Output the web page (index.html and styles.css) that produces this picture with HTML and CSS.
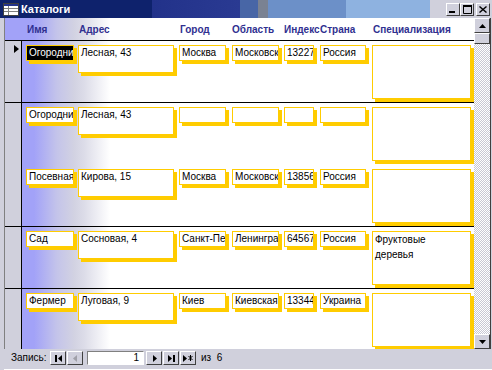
FILE: index.html
```html
<!DOCTYPE html>
<html lang="ru">
<head>
    <meta charset="UTF-8">
    <title>Каталоги</title>
    <link rel="stylesheet" href="styles.css">
</head>
<body>
    <div class="window">
        <!-- заголовок окна -->
        <div class="titlebar">
            <svg class="appicon" width="16" height="13" viewBox="0 0 16 13">
                <rect x="0.5" y="0.5" width="15" height="12" fill="#fff" stroke="#404040"/>
                <rect x="1" y="1" width="14" height="2" fill="#24348c"/>
                <path d="M1 5.5h14M1 8.5h14M5.5 3v9" stroke="#808080"/>
            </svg>
            <span class="title">Каталоги</span>
            <div class="tbuttons">
                <span class="tbtn"><svg width="8" height="8" viewBox="0 0 8 8"><rect x="0" y="6" width="6" height="2" fill="#000"/></svg></span>
                <span class="tbtn"><svg width="9" height="9" viewBox="0 0 9 9"><path d="M0.5 1.5h8v7h-8z" fill="none" stroke="#000"/><rect x="0" y="0" width="9" height="2" fill="#000"/></svg></span>
                <span class="tbtn close"><svg width="8" height="7" viewBox="0 0 8 7"><path d="M0.5 0.5l7 6M7.5 0.5l-7 6" stroke="#000" stroke-width="1.4"/></svg></span>
            </div>
        </div>

        <div class="client">
            <div class="main">
                <div class="sheet">
                    <div class="header">
                        <span class="h-name">Имя</span>
                        <span class="h-addr">Адрес</span>
                        <span class="h-city">Город</span>
                        <span class="h-region">Область</span>
                        <span class="h-zip">Индекс</span>
                        <span class="h-country">Страна</span>
                        <span class="h-spec">Специализация</span>
                    </div>

                    <div class="row">
                        <div class="sel"><span class="arrow"></span></div>
                        <div class="cells">
                            <div class="fld f-name selected">Огородник</div>
                            <div class="fld f-addr">Лесная, 43</div>
                            <div class="fld f-city">Москва</div>
                            <div class="fld f-region">Московская</div>
                            <div class="fld f-zip">13227</div>
                            <div class="fld f-country">Россия</div>
                            <div class="fld f-spec"></div>
                        </div>
                    </div>

                    <div class="row noline">
                        <div class="sel"></div>
                        <div class="cells">
                            <div class="fld f-name">Огородник</div>
                            <div class="fld f-addr">Лесная, 43</div>
                            <div class="fld f-city"></div>
                            <div class="fld f-region"></div>
                            <div class="fld f-zip"></div>
                            <div class="fld f-country"></div>
                            <div class="fld f-spec"></div>
                        </div>
                    </div>

                    <div class="row">
                        <div class="sel"></div>
                        <div class="cells">
                            <div class="fld f-name">Посевная</div>
                            <div class="fld f-addr">Кирова, 15</div>
                            <div class="fld f-city">Москва</div>
                            <div class="fld f-region">Московская</div>
                            <div class="fld f-zip">13856</div>
                            <div class="fld f-country">Россия</div>
                            <div class="fld f-spec"></div>
                        </div>
                    </div>

                    <div class="row">
                        <div class="sel"></div>
                        <div class="cells">
                            <div class="fld f-name">Сад</div>
                            <div class="fld f-addr">Сосновая, 4</div>
                            <div class="fld f-city">Санкт-Петербург</div>
                            <div class="fld f-region">Ленинградская</div>
                            <div class="fld f-zip">64567</div>
                            <div class="fld f-country">Россия</div>
                            <div class="fld f-spec">Фруктовые деревья</div>
                        </div>
                    </div>

                    <div class="row">
                        <div class="sel"></div>
                        <div class="cells">
                            <div class="fld f-name">Фермер</div>
                            <div class="fld f-addr">Луговая, 9</div>
                            <div class="fld f-city">Киев</div>
                            <div class="fld f-region">Киевская</div>
                            <div class="fld f-zip">13344</div>
                            <div class="fld f-country">Украина</div>
                            <div class="fld f-spec"></div>
                        </div>
                    </div>
                </div>

                <!-- вертикальная полоса прокрутки -->
                <div class="vscroll">
                    <span class="sbtn"><svg width="7" height="4" viewBox="0 0 7 4"><path d="M3.5 0L7 4H0z" fill="#000"/></svg></span>
                    <span class="thumb"></span>
                    <span class="track"></span>
                    <span class="sbtn"><svg width="7" height="4" viewBox="0 0 7 4"><path d="M0 0h7L3.5 4z" fill="#000"/></svg></span>
                </div>
            </div>

            <!-- навигация по записям -->
            <div class="footer">
                <span class="rec-label">Запись:</span>
                <span class="nbtn"><svg width="7" height="7" viewBox="0 0 7 7"><rect x="0" y="0" width="2" height="7" fill="#000"/><path d="M7 0v7L3 3.5z" fill="#000"/></svg></span>
                <span class="nbtn"><svg width="5" height="7" viewBox="0 0 5 7"><path d="M4 0v7L0 3.5z" fill="#a0a0a8"/></svg></span>
                <span class="recno">1</span>
                <span class="nbtn"><svg width="5" height="7" viewBox="0 0 5 7"><path d="M1 0v7l4-3.5z" fill="#000"/></svg></span>
                <span class="nbtn"><svg width="7" height="7" viewBox="0 0 7 7"><path d="M0 0v7l4-3.5z" fill="#000"/><rect x="5" y="0" width="2" height="7" fill="#000"/></svg></span>
                <span class="nbtn"><svg width="10" height="7" viewBox="0 0 10 7"><path d="M0 0v7l4-3.5z" fill="#000"/><path d="M5.5 1l4 4M9.5 1l-4 4M7.5 0v6" stroke="#000"/></svg></span>
                <span class="rec-total">из &nbsp;6</span>
            </div>
        </div>
    </div>
</body>
</html>
```

FILE: styles.css
```css
body{
    margin: 0;
    background-color: #d0d0dc;
    font-family: "Liberation Sans", Arial, sans-serif;
}
.window{
    width: 492px;
    height: 370px;
    display: flex;
    flex-direction: column;
    overflow: hidden;
}
/* заголовок окна - ступенчатый градиент */
.titlebar{
    height: 18px;
    display: flex;
    align-items: center;
    background: linear-gradient(to right,
        #0e226c 0, #0e226c 152px,
        #22328a 152px, #2a3a92 240px,
        #4866a6 240px, #4866a6 258px,
        #7a8292 258px, #7a8292 268px,
        #6c90c8 268px, #6c90c8 346px,
        #8eb2e0 346px, #8eb2e0 430px,
        #d0d0dc 430px);
}
.appicon{
    margin-left: 3px;
    margin-top: 1px;
}
.title{
    margin-left: 2px;
    color: #fff;
    font-weight: bold;
    font-size: 11px;
}
.tbuttons{
    margin-left: auto;
    margin-right: 2px;
    display: flex;
}
.tbtn{
    width: 14px;
    height: 13px;
    box-sizing: border-box;
    display: flex;
    align-items: center;
    justify-content: center;
    background-color: #d0d0dc;
    border: 1px solid;
    border-color: #fff #404040 #404040 #fff;
}
.tbtn.close{
    margin-left: 2px;
}

.client{
    flex: 1;
    display: flex;
    flex-direction: column;
    padding-left: 4px;
}
.main{
    height: 331px;
    display: flex;
    border-left: 1px solid #808080;
}
.sheet{
    width: 469px;
    overflow: hidden;
    background-color: #fff;
}
/* шапка с названиями полей */
.header{
    height: 23px;
    box-sizing: border-box;
    padding-left: 22px;
    display: flex;
    align-items: center;
    border-bottom: 1px solid #000;
    background: linear-gradient(to right, #a2a2f8 0, #a2a2f8 29px, #c4c4ea 52px, #d2d2e2 69px, #dcdce8 79px, #fff 105px);
    font-size: 10px;
    font-weight: bold;
    color: #303090;
}
.h-name{ width: 52px; }
.h-addr{ width: 101px; }
.h-city{ width: 52px; }
.h-region{ width: 52px; }
.h-zip{ width: 36px; }
.h-country{ width: 53px; }

/* строки записей */
.row{
    height: 62px;
    box-sizing: border-box;
    display: flex;
    border-bottom: 1px solid #000;
}
.row.noline{
    border-bottom: none;
}
.sel{
    width: 16px;
    background-color: #d0d0dc;
    border-right: 1px solid #000;
    position: relative;
}
.arrow{
    position: absolute;
    left: 9px;
    top: 4px;
    border-left: 5px solid #000;
    border-top: 4px solid transparent;
    border-bottom: 4px solid transparent;
}
.cells{
    flex: 1;
    display: flex;
    align-items: flex-start;
    padding: 4px 0 0 4px;
    background: linear-gradient(to right, #a2a2f8 0, #a2a2f8 12px, #c4c4ea 35px, #d2d2e2 52px, #dcdce8 62px, #fff 88px);
}
.fld{
    height: 16px;
    box-sizing: border-box;
    border: 1px solid #fc0;
    box-shadow: 3px 3px 0 #fc0;
    background-color: #fff;
    padding: 0 2px;
    font-size: 10px;
    line-height: 13px;
    white-space: nowrap;
    overflow: hidden;
    flex-shrink: 0;
}
.fld.selected{
    background-color: #000;
    color: #fff;
}
.f-name{ width: 48px; }
.f-addr{ width: 96px; height: 28px; margin-left: 4px; }
.f-city{ width: 47px; margin-left: 5px; }
.f-region{ width: 47px; margin-left: 6px; }
.f-zip{ width: 30px; margin-left: 5px; }
.f-country{ width: 46px; margin-left: 6px; }
.f-spec{
    width: 99px;
    height: 54px;
    margin-left: 6px;
    white-space: normal;
    line-height: 15px;
    padding-right: 40px;
}

/* полоса прокрутки */
.vscroll{
    width: 16px;
    display: flex;
    flex-direction: column;
    border-right: 1px solid #404040;
}
.sbtn, .thumb{
    height: 15px;
    box-sizing: border-box;
    display: flex;
    align-items: center;
    justify-content: center;
    background-color: #d0d0dc;
    border: 1px solid;
    border-color: #fff #404040 #404040 #fff;
}
.thumb{
    height: 11px;
}
.track{
    flex: 1;
    background: repeating-conic-gradient(#c8c8d4 0 25%, #fff 0 50%) 0 0/2px 2px;
}

/* навигация внизу */
.footer{
    height: 21px;
    box-sizing: border-box;
    padding: 2px 0 0 7px;
    display: flex;
    align-items: flex-start;
    font-size: 10px;
    border-bottom: 1px solid #fff;
}
.rec-label{
    width: 39px;
    line-height: 14px;
}
.nbtn{
    width: 16px;
    height: 14px;
    box-sizing: border-box;
    display: flex;
    align-items: center;
    justify-content: center;
    background-color: #d0d0dc;
    border: 1px solid;
    border-color: #fff #404040 #404040 #fff;
    margin-right: 1px;
}
.recno{
    width: 57px;
    height: 14px;
    box-sizing: border-box;
    margin: 0 2px 0 3px;
    background-color: #fff;
    border: 1px solid;
    border-color: #808080 #fff #fff #808080;
    text-align: right;
    padding-right: 4px;
    line-height: 12px;
}
.rec-total{
    margin-left: 4px;
    line-height: 14px;
}
```
